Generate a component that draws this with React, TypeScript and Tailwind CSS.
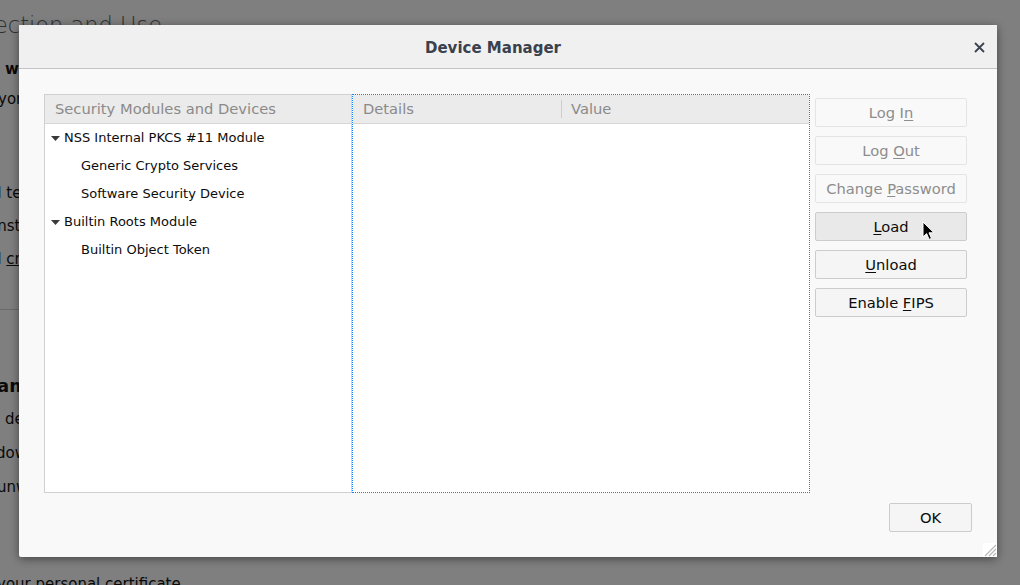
import type { ReactNode } from "react";

const font = { fontFamily: '"DejaVu Sans", "Liberation Sans", sans-serif' };

type Row = { label: string; level: 0 | 1 };

const rows: Row[] = [
  { label: "NSS Internal PKCS #11 Module", level: 0 },
  { label: "Generic Crypto Services", level: 1 },
  { label: "Software Security Device", level: 1 },
  { label: "Builtin Roots Module", level: 0 },
  { label: "Builtin Object Token", level: 1 },
];

function Twisty() {
  return (
    <svg aria-hidden="true" className="mr-[4px] shrink-0" height="5" viewBox="0 0 9 5" width="9">
      <path d="M0 0h9L4.5 5z" fill="#3a3a3a" />
    </svg>
  );
}

function ActionButton({
  children,
  disabled,
  hover,
}: {
  children: ReactNode;
  disabled?: boolean;
  hover?: boolean;
}) {
  return (
    <button
      className={
        disabled
          ? "flex h-[29px] w-[152px] items-center justify-center rounded-[2px] border border-[#e4e4e4] bg-[#f9f9f9] text-[14.7px] text-[#8d8d8d]"
          : hover
            ? "flex h-[29px] w-[152px] items-center justify-center rounded-[2px] border border-[#cccccc] bg-[#e9e9e9] text-[14.7px] text-[#0c0c0d]"
            : "flex h-[29px] w-[152px] items-center justify-center rounded-[2px] border border-[#cccccc] bg-[#f5f5f5] text-[14.7px] text-[#0c0c0d]"
      }
      disabled={disabled}
      type="button"
    >
      <span className="pt-px">{children}</span>
    </button>
  );
}

function BackgroundPage() {
  return (
    <div className="flex flex-col text-[15px] text-[#0a0a0a]">
      <div className="ml-[-6px] h-[44px] pt-[3px] text-[22.5px] font-light leading-[44px] text-[#303030]">
        ection and Use
      </div>
      <div className="mt-[10px] ml-[5px] h-[30px] font-semibold leading-[30px]">will send</div>
      <div className="ml-[-2px] h-[30px] leading-[30px]">yond the</div>
      <div className="mt-[63px] ml-[-8px] h-[33px] leading-[33px]">d technical</div>
      <div className="ml-[-7px] h-[33px] leading-[33px]">install and</div>
      <div className="ml-[-8px] h-[33px] leading-[33px]">
        d <span className="underline">crash</span>
      </div>
      <div className="mt-[33px] h-px w-[19px] bg-[#6a6a6a]" />
      <div className="mt-[64px] ml-[-3px] h-[24px] text-[18px] font-bold leading-[24px]">
        ampl
      </div>
      <div className="mt-[4px] ml-[-4px] h-[34px] leading-[34px]">l deceptive</div>
      <div className="ml-[-4px] h-[34px] leading-[34px]">downloads</div>
      <div className="ml-[-3px] h-[34px] leading-[34px]">unwanted</div>
      <div className="mt-[63px] ml-[-3px] h-[34px] leading-[34px]">your personal certificate</div>
    </div>
  );
}

export default function App() {
  return (
    <div className="relative h-[585px] w-[1020px] overflow-hidden bg-[#7f7f7f]" style={font}>
      <BackgroundPage />

      <div className="absolute left-[19px] top-[25px] flex h-[532px] w-[978px] flex-col rounded-[2px] bg-[#f9f9f9] shadow-[0_2px_10px_rgba(0,0,0,0.45)]">
        <div className="relative flex h-[44px] shrink-0 items-center justify-center border-b border-[#c4c4c4] bg-[#f0f0f0] pt-[4px] pr-[30px]">
          <span className="text-[15px] font-bold text-[#3a404c]">Device Manager</span>
          <svg
            aria-hidden="true"
            className="absolute right-[12px] top-[17px]"
            height="11"
            viewBox="0 0 11 11"
            width="11"
          >
            <path d="M1 1l9 9M10 1l-9 9" stroke="#3b4350" strokeWidth="1.8" />
          </svg>
        </div>

        <div className="flex flex-1 flex-col px-[25px] pt-[25px] pb-[25px]">
          <div className="flex h-[399px]">
            <div className="flex w-[308px] flex-col border border-[#d0d0d0] bg-white">
              <div className="flex h-[29px] shrink-0 items-center border-b border-[#d7d7d7] bg-[#ebebeb] pl-[10px] text-[14.7px] text-[#8a8a8a]">
                Security Modules and Devices
              </div>
              <div className="flex flex-col">
                {rows.map((row) => (
                  <div
                    className={
                      row.level === 0
                        ? "flex h-[28px] items-center pl-[6px] text-[13px] text-[#0c0c0d]"
                        : "flex h-[28px] items-center pl-[36px] text-[13px] text-[#0c0c0d]"
                    }
                    key={row.label}
                  >
                    {row.level === 0 ? <Twisty /> : null}
                    {row.label}
                  </div>
                ))}
              </div>
            </div>

            <div className="flex w-[458px] flex-col border border-dotted border-[#0a84ff] bg-white">
              <div className="flex h-[29px] shrink-0 items-center border-b border-[#d7d7d7] bg-[#ebebeb] text-[14.7px] text-[#8a8a8a]">
                <span className="w-[208px] pl-[10px]">Details</span>
                <span className="h-[18px] w-px bg-[#cdcdcd]" />
                <span className="pl-[9px]">Value</span>
              </div>
            </div>

            <div className="ml-[5px] flex flex-col gap-[9px] pt-[4px]">
              <ActionButton disabled>
                Log I<span className="underline underline-offset-2">n</span>
              </ActionButton>
              <ActionButton disabled>
                Log <span className="underline underline-offset-2">O</span>ut
              </ActionButton>
              <ActionButton disabled>
                Change <span className="underline underline-offset-2">P</span>assword
              </ActionButton>
              <ActionButton hover>
                <span className="underline underline-offset-2">L</span>oad
              </ActionButton>
              <ActionButton>
                <span className="underline underline-offset-2">U</span>nload
              </ActionButton>
              <ActionButton>
                Enable <span className="underline underline-offset-2">F</span>IPS
              </ActionButton>
            </div>
          </div>

          <div className="mt-[10px] flex justify-end">
            <button
              className="flex h-[29px] w-[83px] items-center justify-center rounded-[2px] border border-[#cccccc] bg-[#f5f5f5] text-[14.7px] text-[#0c0c0d]"
              type="button"
            >
              <span className="pt-px">OK</span>
            </button>
          </div>
        </div>

        <svg
          aria-hidden="true"
          className="absolute bottom-0 right-0"
          height="14"
          viewBox="0 0 14 14"
          width="14"
        >
          <rect fill="#ffffff" height="14" width="14" />
          <path d="M13 2L2 13M13 6L6 13M13 10L10 13" stroke="#b8b8b8" strokeWidth="1.2" />
        </svg>
      </div>

      <svg
        aria-hidden="true"
        className="absolute left-[922px] top-[221px]"
        height="20"
        viewBox="0 0 13 20"
        width="13"
      >
        <path
          d="M1 1v15l3.6-3.4 2.5 5.8 2.4-1-2.5-5.6H12z"
          fill="#000000"
          stroke="#ffffff"
          strokeLinejoin="round"
          strokeWidth="1"
        />
      </svg>
    </div>
  );
}
